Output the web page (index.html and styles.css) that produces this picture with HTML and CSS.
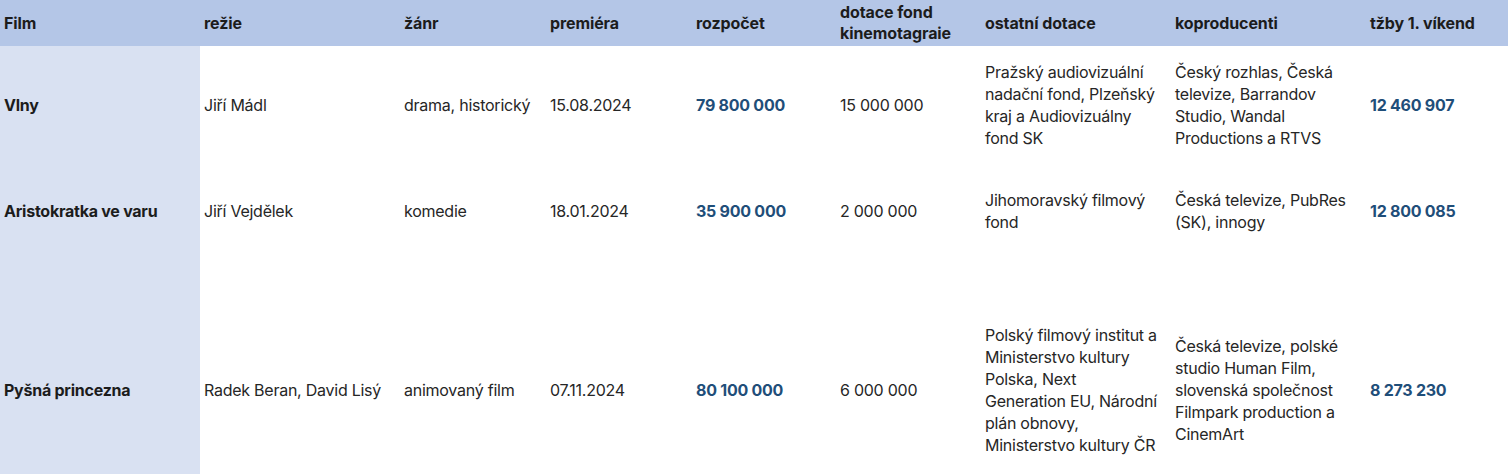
FILE: index.html
```html
<!DOCTYPE html>
<html lang="cs">
<head>
<meta charset="utf-8">
<title>Filmy</title>
<link rel="stylesheet" href="styles.css">
</head>
<body>
<table class="films">
  <colgroup>
    <col class="c-film">
    <col class="c-rezie">
    <col class="c-zanr">
    <col class="c-prem">
    <col class="c-rozp">
    <col class="c-dot">
    <col class="c-ost">
    <col class="c-kop">
    <col class="c-trzby">
  </colgroup>
  <thead>
    <tr class="head">
      <th>Film</th>
      <th>režie</th>
      <th>žánr</th>
      <th>premiéra</th>
      <th>rozpočet</th>
      <th>dotace fond<br>kinemotagraie</th>
      <th>ostatní dotace</th>
      <th>koproducenti</th>
      <th>tžby 1. víkend</th>
    </tr>
  </thead>
  <tbody>
    <tr class="r1">
      <td class="name">Vlny</td>
      <td>Jiří Mádl</td>
      <td>drama, historický</td>
      <td>15.08.2024</td>
      <td class="num">79 800 000</td>
      <td>15 000 000</td>
      <td class="lines">Pražský audiovizuální<br>nadační fond, Plzeňský<br>kraj a Audiovizuálny<br>fond SK</td>
      <td class="lines">Český rozhlas, Česká<br>televize, Barrandov<br>Studio, Wandal<br>Productions a RTVS</td>
      <td class="num">12 460 907</td>
    </tr>
    <tr class="r2">
      <td class="name">Aristokratka ve varu</td>
      <td>Jiří Vejdělek</td>
      <td>komedie</td>
      <td>18.01.2024</td>
      <td class="num">35 900 000</td>
      <td>2 000 000</td>
      <td class="lines">Jihomoravský filmový<br>fond</td>
      <td class="lines">Česká televize, PubRes<br>(SK), innogy</td>
      <td class="num">12 800 085</td>
    </tr>
    <tr class="r3">
      <td class="name">Pyšná princezna</td>
      <td>Radek Beran, David Lisý</td>
      <td>animovaný film</td>
      <td>07.11.2024</td>
      <td class="num">80 100 000</td>
      <td>6 000 000</td>
      <td class="lines">Polský filmový institut a<br>Ministerstvo kultury<br>Polska, Next<br>Generation EU, Národní<br>plán obnovy,<br>Ministerstvo kultury ČR</td>
      <td class="lines">Česká televize, polské<br>studio Human Film,<br>slovenská společnost<br>Filmpark production a<br>CinemArt</td>
      <td class="num">8 273 230</td>
    </tr>
  </tbody>
</table>
</body>
</html>
```

FILE: styles.css
```css
html, body {
  margin: 0;
  padding: 0;
  background: #ffffff;
  overflow: hidden;
}

body {
  font-family: Inter, "Noto Sans", "Liberation Sans", sans-serif;
  font-size: 16px;
  letter-spacing: -0.25px;
  color: #262626;
}

.films {
  width: 1508px;
  table-layout: fixed;
  border-collapse: collapse;
  border-spacing: 0;
}

.c-film { width: 200px; }
.c-rezie { width: 200px; }
.c-zanr { width: 146px; }
.c-prem { width: 146px; }
.c-rozp { width: 144px; }
.c-dot { width: 145px; }
.c-ost { width: 190px; }
.c-kop { width: 195px; }
.c-trzby { width: 142px; }

.films th,
.films td {
  padding: 0 4px;
  text-align: left;
  vertical-align: middle;
  line-height: 22px;
}

.films td.lines {
  white-space: nowrap;
}

.head {
  height: 46px;
  background: #b4c6e7;
}

.head th {
  font-weight: 700;
  color: #1c1c1c;
  line-height: 21px;
  letter-spacing: -0.1px;
}

.r1 { height: 118px; }
.r2 { height: 94px; }
.r3 { height: 264px; }

.films td.name {
  background: #d9e1f2;
  font-weight: 700;
  color: #1c1c1c;
}

.films td.num {
  font-weight: 700;
  color: #1f4e79;
}
```
